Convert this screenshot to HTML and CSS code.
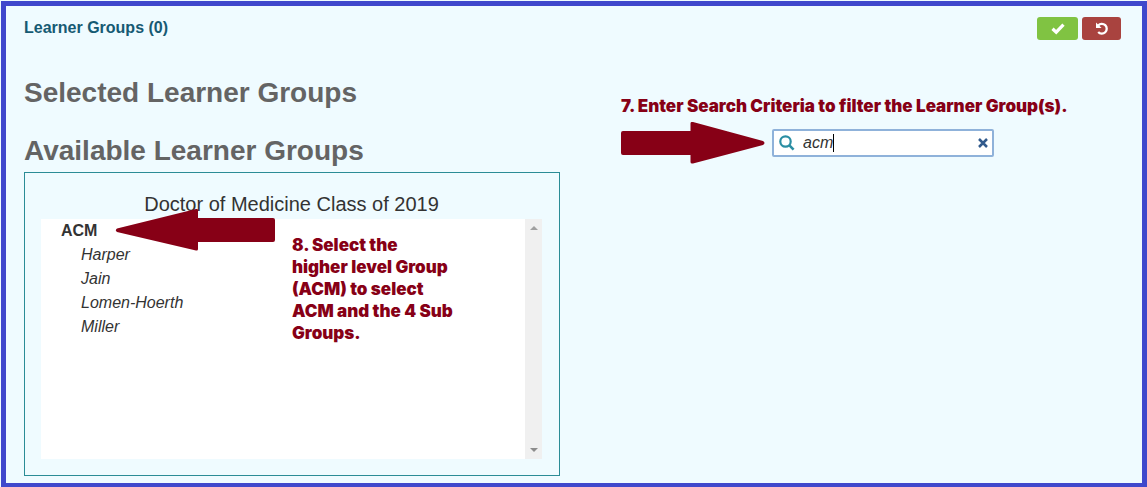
FILE: index.html
```
<!DOCTYPE html>
<html lang="en">
<head>
<meta charset="utf-8">
<title>Learner Groups</title>
<link rel="stylesheet" href="styles.css">
</head>
<body>
<main class="frame">
  <header class="bar">
    <h1 class="bar-title">Learner Groups (0)</h1>
    <div class="actions">
      <button class="action save" type="button" aria-label="Save">
        <svg width="14" height="12" viewBox="0 0 14 12"><path d="M1.5 5.800 5.200 9.200 12.500 1.600" fill="none" stroke="#fff" stroke-width="3.200"/></svg>
      </button>
      <button class="action undo" type="button" aria-label="Undo">
        <svg width="14" height="14" viewBox="0 0 14 14"><path d="M3.200 3.400A4.900 4.900 0 1 1 3.200 10" fill="none" stroke="#fff" stroke-width="2.300"/><path d="M1 .5v5.600h5.600z" fill="#fff"/></svg>
      </button>
    </div>
  </header>
  <div class="columns">
    <section class="groups">
      <h2 class="heading">Selected Learner Groups</h2>
      <h2 class="heading">Available Learner Groups</h2>
      <div class="panel">
        <h3 class="panel-title">Doctor of Medicine Class of 2019</h3>
        <div class="list-box">
          <ul class="list">
            <li class="parent">ACM
              <ul class="sublist">
                <li>Harper</li>
                <li>Jain</li>
                <li>Lomen-Hoerth</li>
                <li>Miller</li>
              </ul>
            </li>
          </ul>
          <div class="scrollbar">
            <svg width="8" height="4" viewBox="0 0 8 4"><path d="M0 4 4 0l4 4z" fill="#a0a0a0"/></svg>
            <svg width="8" height="4" viewBox="0 0 8 4"><path d="M0 0h8L4 4z" fill="#8c8c8c"/></svg>
          </div>
          <svg class="list-arrow" width="160" height="42" viewBox="0 0 160 42"><path d="M2 19.500 81 0q2-.5 2 1.500V9h75q2 0 2 2v20q0 2-2 2H83v7q0 2-2 1.500L2 23q-2.500-1.700 0-3.500z" fill="#870016"/></svg>
          <p class="note list-note">8. Select the<br>higher level Group<br>(ACM) to select<br>ACM and the 4 Sub<br>Groups.</p>
        </div>
      </div>
    </section>
    <section class="filter">
      <label class="note" for="search">7. Enter Search Criteria to filter the Learner Group(s).</label>
      <div class="search-row">
        <svg width="144" height="42" viewBox="0 0 144 42"><path d="M142 19 72 0q-2.500-.5-2.500 1.500V9H2q-2 0-2 2v20q0 2 2 2h67.500v7q0 2 2.500 1.500L142 23q3-2 0-4z" fill="#870016"/></svg>
        <div class="search">
          <svg width="16" height="16" viewBox="0 0 16 16"><g fill="none" stroke="#2a8ea3"><circle cx="6.500" cy="6.500" r="5.200" stroke-width="2.200"/><path d="m10.400 10.400 4.200 4.200" stroke-width="2.600"/></g></svg>
          <input class="search-input" id="search" type="text" value="acm">
          <button class="clear" type="button" aria-label="Clear">
            <svg width="10" height="10" viewBox="0 0 10 10"><path d="m1 1 8 8M9 1 1 9" stroke="#315a8c" stroke-width="2.500"/></svg>
          </button>
          <span class="caret"></span>
        </div>
      </div>
    </section>
  </div>
</main>
</body>
</html>
```
FILE: styles.css
```
* {
  box-sizing: border-box;
}

body {
  margin: 0;
  padding: 1px 0 0 1px;
  background: #effbff;
  color: #333;
  font: 16px/24px "Liberation Sans", Arial, sans-serif;
}

h1, h2, h3, p, ul {
  margin: 0;
  padding: 0;
}

ul {
  list-style: none;
}

svg {
  display: block;
  flex: none;
}

.frame {
  min-height: calc(100vh - 1px);
  padding: 11px 21px 7px 18px;
  border: 5px solid #3f48cc;
  border-bottom-width: 4px;
}

.bar {
  display: flex;
  justify-content: space-between;
  align-items: flex-start;
}

.bar-title {
  color: #165a73;
  font-size: 16px;
  line-height: 22px;
}

.actions {
  display: flex;
  gap: 4px;
}

.action {
  display: flex;
  align-items: center;
  justify-content: center;
  height: 23px;
  padding: 0;
  border: 0;
  border-radius: 3px;
}

.save {
  width: 41px;
  background: #80c342;
}

.undo {
  width: 39px;
  background: #a9433f;
}

.columns {
  display: grid;
  grid-template-columns: 536fr 561fr;
}

.groups {
  padding-top: 37px;
}

.heading {
  margin-bottom: 26px;
  color: #646464;
  font-size: 28px;
  line-height: 32px;
}

.heading + .heading {
  margin-bottom: 5px;
}

.panel {
  padding: 19px 17px 16px 16px;
  border: 1px solid #2b8c96;
}

.panel-title {
  margin-bottom: 3px;
  font-size: 20px;
  font-weight: 400;
  text-align: center;
}

.list-box {
  position: relative;
  display: flex;
  justify-content: space-between;
  min-height: 240px;
  background: #fff;
}

.list {
  padding-left: 20px;
}

.parent {
  font-weight: 700;
}

.sublist {
  padding-left: 20px;
  font-style: italic;
  font-weight: 400;
}

.scrollbar {
  display: flex;
  flex-direction: column;
  justify-content: space-between;
  align-items: center;
  width: 17px;
  padding: 7px 0;
  background: #f0f0f0;
}

.list-arrow {
  position: absolute;
  top: -10px;
  left: 74px;
}

.note {
  color: #870016;
  font: 900 17px/22px Inter, "Arial Black", sans-serif;
}

.list-note {
  position: absolute;
  top: 15px;
  left: 251px;
}

.filter {
  padding: 55px 0 0 61px;
}

.search-row {
  display: flex;
  align-items: center;
  gap: 7px;
  margin-top: 3px;
}

.search {
  position: relative;
  display: flex;
  align-items: center;
  gap: 8px;
  width: 222px;
  height: 28px;
  padding: 0 4px 0 5px;
  border: 2px solid #8fb2da;
  border-radius: 2px;
  background: #fff;
}

.search-input {
  flex: 1;
  min-width: 0;
  padding: 0;
  border: 0;
  outline: 0;
  background: transparent;
  color: #333;
  font: italic 16px/24px "Liberation Sans", Arial, sans-serif;
}

.caret {
  position: absolute;
  top: 3px;
  left: 59px;
  width: 1px;
  height: 18px;
  background: #000;
}

.clear {
  padding: 0;
  border: 0;
  background: none;
}
```
